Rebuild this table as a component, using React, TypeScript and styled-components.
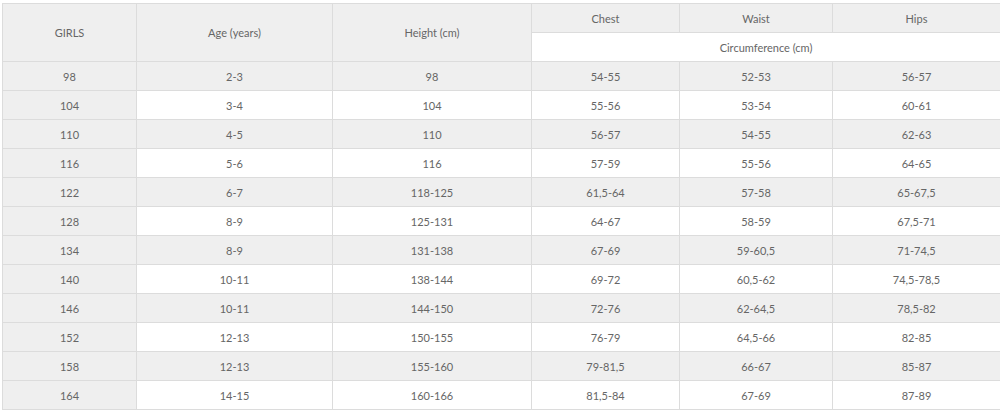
import React from "react";
import styled, { createGlobalStyle } from "styled-components";

const Global = createGlobalStyle`
  html, body { margin: 0; padding: 0; background: #fff; overflow: hidden; }
  body { font-family: "Lato", "Open Sans", sans-serif; }
`;

const Wrap = styled.div`
  padding: 3px 0 0 2px;
`;

const Table = styled.table`
  border-collapse: collapse;
  table-layout: fixed;
  width: 998px;
  font-size: 11px;
  color: #666;
`;

const Cell = styled.td<{ $gray?: boolean }>`
  border: 1px solid #dcdcdc;
  background: ${(p) => (p.$gray ? "#efefef" : "#fff")};
  text-align: center;
  vertical-align: middle;
  height: 29px;
  padding: 0;
  box-sizing: border-box;
  white-space: nowrap;
`;

const HeadCell = styled(Cell).attrs({ as: "th" })`
  font-weight: 400;
`;

const widths = [134, 196, 199, 148, 153, 168];

const rows: string[][] = [
  ["98", "2-3", "98", "54-55", "52-53", "56-57"],
  ["104", "3-4", "104", "55-56", "53-54", "60-61"],
  ["110", "4-5", "110", "56-57", "54-55", "62-63"],
  ["116", "5-6", "116", "57-59", "55-56", "64-65"],
  ["122", "6-7", "118-125", "61,5-64", "57-58", "65-67,5"],
  ["128", "8-9", "125-131", "64-67", "58-59", "67,5-71"],
  ["134", "8-9", "131-138", "67-69", "59-60,5", "71-74,5"],
  ["140", "10-11", "138-144", "69-72", "60,5-62", "74,5-78,5"],
  ["146", "10-11", "144-150", "72-76", "62-64,5", "78,5-82"],
  ["152", "12-13", "150-155", "76-79", "64,5-66", "82-85"],
  ["158", "12-13", "155-160", "79-81,5", "66-67", "85-87"],
  ["164", "14-15", "160-166", "81,5-84", "67-69", "87-89"],
];

export default function App() {
  return (
    <>
      <Global />
      <Wrap>
        <Table>
          <colgroup>
            {widths.map((w, i) => (
              <col key={i} style={{ width: w }} />
            ))}
          </colgroup>
          <thead>
            <tr>
              <HeadCell $gray rowSpan={2}>GIRLS</HeadCell>
              <HeadCell $gray rowSpan={2}>Age (years)</HeadCell>
              <HeadCell $gray rowSpan={2}>Height (cm)</HeadCell>
              <HeadCell $gray>Chest</HeadCell>
              <HeadCell $gray>Waist</HeadCell>
              <HeadCell $gray>Hips</HeadCell>
            </tr>
            <tr>
              <HeadCell colSpan={3}>Circumference (cm)</HeadCell>
            </tr>
          </thead>
          <tbody>
            {rows.map((r, ri) => (
              <tr key={ri}>
                {r.map((c, ci) => (
                  <Cell key={ci} $gray={ci === 0 || ri % 2 === 0}>
                    {c}
                  </Cell>
                ))}
              </tr>
            ))}
          </tbody>
        </Table>
      </Wrap>
    </>
  );
}
